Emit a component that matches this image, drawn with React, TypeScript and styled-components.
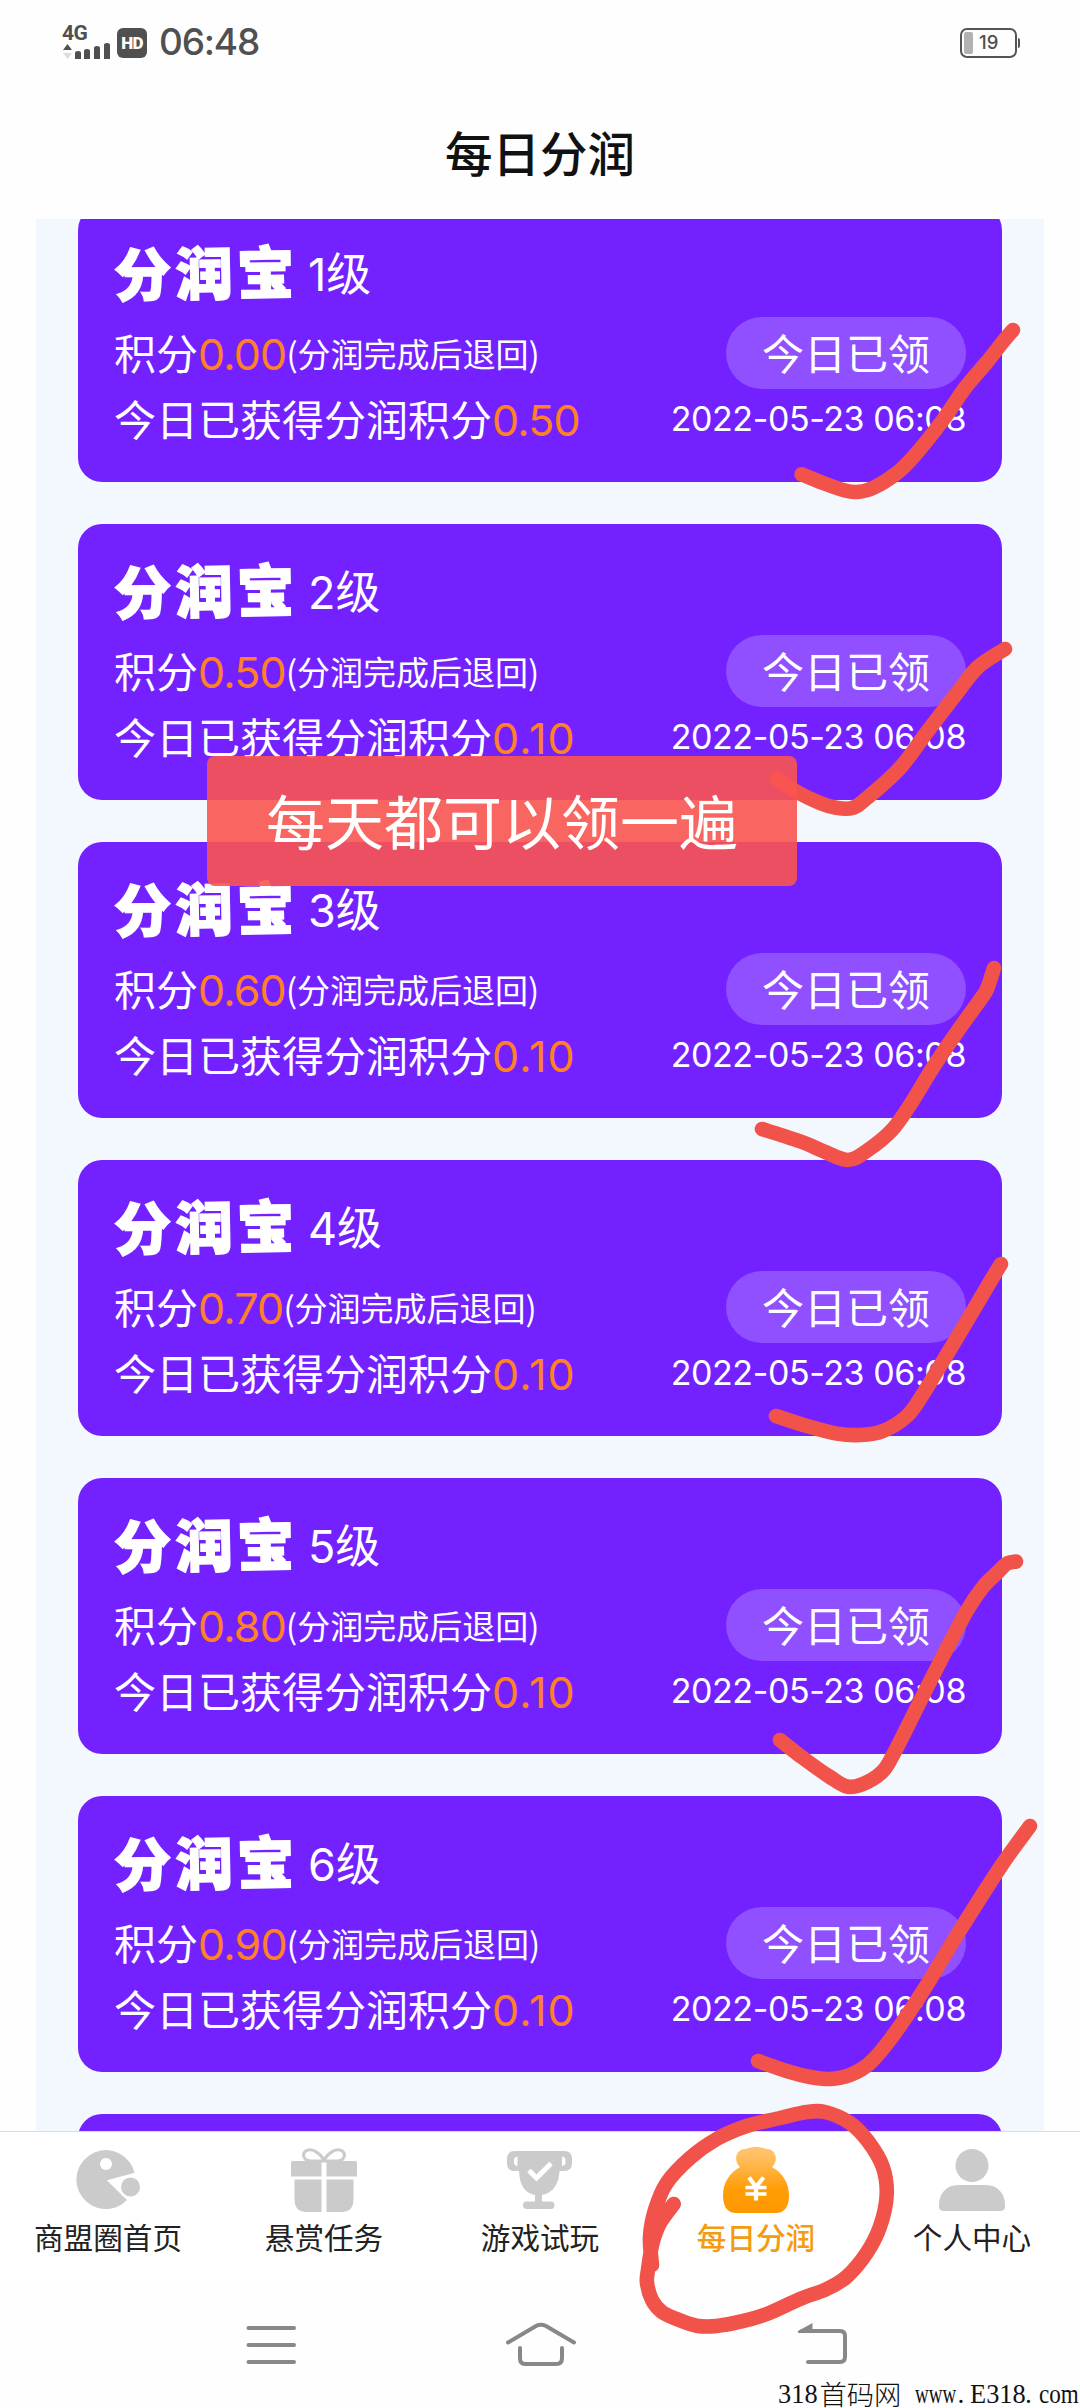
import React from "react";
import styled, { createGlobalStyle } from "styled-components";

const CJK = `"Noto Sans CJK SC", sans-serif`;
const NUM = `Inter, "Noto Sans CJK SC", sans-serif`;
const RED = "#f1534b";

const GlobalStyle = createGlobalStyle`
  * { box-sizing: border-box; }
  html, body { margin: 0; padding: 0; background: #fff; }
  body { font-family: ${CJK}; }
`;

const Screen = styled.div`
  position: relative;
  width: 1080px;
  height: 2408px;
  display: flex;
  flex-direction: column;
  overflow: hidden;
  background: #fefefe;
`;

/* ---------- status bar ---------- */

const StatusBar = styled.header`
  flex: none;
  height: 84px;
  padding: 0 60px 0 62px;
  display: flex;
  align-items: center;
  justify-content: space-between;
  color: #505050;
`;

const StatusGroup = styled.div`
  display: flex;
  align-items: center;
  gap: 6px;
`;

const Network = styled.div`
  width: 49px;
  height: 34px;
  display: flex;
  flex-direction: column;
`;

const NetworkType = styled.span`
  height: 16px;
  font: 700 21px/16px Roboto, sans-serif;
  letter-spacing: -0.6px;
`;

const HdBadge = styled.span`
  width: 30px;
  height: 30px;
  margin-top: 1px;
  border-radius: 6px;
  display: flex;
  align-items: center;
  justify-content: center;
  background: #505050;
  color: #fff;
  font: 900 17px/30px Roboto, sans-serif;
  letter-spacing: -0.6px;
`;

const Clock = styled.time`
  margin-left: 6px;
  font: 500 37px/40px ${NUM};
  letter-spacing: -1.2px;
`;

const Battery = styled.div`
  display: flex;
  align-items: center;
  gap: 1px;
  margin-top: 1px;
`;

const BatteryShell = styled.div`
  width: 57px;
  height: 30px;
  padding: 2px;
  border: 2.5px solid #555;
  border-radius: 7px;
  display: flex;
  align-items: stretch;
  gap: 6px;
`;

const BatteryLevel = styled.i`
  width: 9px;
  border-radius: 2px;
  background: #b2b2b2;
`;

const BatteryText = styled.span`
  font: 500 18.5px/21px ${NUM};
`;

const BatteryNub = styled.i`
  width: 2px;
  height: 10px;
  border-radius: 0 2px 2px 0;
  background: #555;
`;

const TitleBar = styled.div`
  flex: none;
  height: 135px;
  display: flex;
  justify-content: center;
`;

const Title = styled.h1`
  margin: 33px 0 0;
  font: 500 47.5px/70px ${CJK};
  color: #111;
`;

/* ---------- card list ---------- */

const Viewport = styled.main`
  flex: none;
  height: 1912px;
  margin: 0 36px;
  overflow: hidden;
  background: #f3f8fe;
`;

const List = styled.div`
  margin-top: -13px;
  padding: 0 42px;
  display: flex;
  flex-direction: column;
  gap: 42px;
`;

const Card = styled.article`
  flex: none;
  height: 276px;
  padding: 24px 36px 30px;
  border-radius: 24px;
  background: #7322ff;
  color: #fff;
`;

const CardHead = styled.div`
  height: 87px;
  display: flex;
  align-items: center;
`;

const Brand = styled.span`
  width: 183px;
  font: 900 57px/64px ${CJK};
  letter-spacing: 4.5px;
  white-space: nowrap;
  -webkit-text-stroke: 1.6px #fff;
  paint-order: stroke fill;
  transform: translate(0, -4px) rotate(-1deg);
`;

const Level = styled.span`
  margin-left: 11px;
  padding-top: 3px;
  font: 400 45px/60px ${NUM};
`;

const CardRow = styled.div<{ $h: number }>`
  height: ${(p) => p.$h}px;
  display: flex;
  align-items: center;
  justify-content: space-between;
`;

const Line = styled.p<{ $drop?: number }>`
  margin: 0;
  padding-top: ${(p) => p.$drop ?? 0}px;
  display: flex;
  align-items: baseline;
  font: 400 42px/60px ${CJK};
  white-space: nowrap;
`;

const Amount = styled.span<{ $loose?: boolean }>`
  font-family: ${NUM};
  font-size: 43px;
  letter-spacing: ${(p) => (p.$loose ? 1.1 : -0.8)}px;
  color: #ff8126;
`;

const Note = styled.small`
  font-size: 33px;
  transform: translateY(-3px);
`;

const Pill = styled.span`
  width: 240px;
  height: 72px;
  border-radius: 36px;
  text-align: center;
  background: #9050ff;
  font: 400 42px/70px ${CJK};
`;

const Stamp = styled.time`
  font: 400 34px/60px ${NUM};
  letter-spacing: -0.42px;
  white-space: nowrap;
`;

/* ---------- bottom bars ---------- */

const TabBar = styled.nav`
  flex: none;
  height: 149px;
  border-top: 1px solid #dcdcdc;
  display: grid;
  grid-template-columns: repeat(5, 1fr);
  background: #fff;
`;

const Tab = styled.div<{ $active?: boolean }>`
  padding-top: 15px;
  display: flex;
  flex-direction: column;
  align-items: center;
  gap: 4px;
  color: ${(p) => (p.$active ? "#f39c12" : "#222")};
  font: ${(p) => (p.$active ? 500 : 400)} 29.6px/40px ${CJK};
  white-space: nowrap;
`;

const SystemNav = styled.div`
  flex: 1;
  padding: 38px 228px 0 243px;
  display: grid;
  grid-template-columns: 260px 293px 56px;
  align-items: start;
`;

/* ---------- things drawn over the page ---------- */

const Toast = styled.div`
  position: absolute;
  left: 207px;
  top: 756px;
  width: 590px;
  height: 130px;
  border-radius: 8px;
  background: rgba(249, 84, 80, 0.9);
  color: #fff;
  text-align: center;
  font: 400 59px/128px ${CJK};
  white-space: nowrap;
`;

const Markup = styled.svg`
  position: absolute;
  inset: 0;
  pointer-events: none;
`;

const Watermark = styled.div`
  position: absolute;
  right: 0;
  bottom: 0;
  height: 26px;
  display: flex;
  color: #111;
  font: 400 27.5px/24px "Liberation Serif", "Noto Sans CJK SC", serif;
  white-space: pre;
`;

const Segment = styled.span<{ $w: number; $squeeze?: number; $cjk?: boolean }>`
  width: ${(p) => p.$w}px;
  ${(p) => p.$cjk && `font: 300 27.3px/22px ${CJK};`}
  transform: scaleX(${(p) => p.$squeeze ?? 1});
  transform-origin: left;
`;

const levels = [
  { level: 1, points: "0.00", gained: "0.50" },
  { level: 2, points: "0.50", gained: "0.10" },
  { level: 3, points: "0.60", gained: "0.10" },
  { level: 4, points: "0.70", gained: "0.10" },
  { level: 5, points: "0.80", gained: "0.10" },
  { level: 6, points: "0.90", gained: "0.10" },
];

type Pt = [number, number];

const ticks: Pt[][] = [
  [[801.7, 474.3], [823, 483], [845, 490.5], [857, 492], [873, 488], [897, 473], [915, 455], [943, 420], [965, 388], [987, 362], [1002, 343], [1013, 330]],
  [[777, 779], [797, 792], [820, 803], [835, 807.5], [852, 808], [867, 798], [900, 768], [927, 732], [957, 693], [978, 667], [1005, 649]],
  [[762, 1129], [802, 1142], [823, 1151], [848, 1160], [868, 1150], [892, 1130], [910, 1105], [933, 1067.5], [957, 1032], [980, 1000], [987, 989], [994, 968]],
  [[776, 1416], [807, 1426], [837, 1433.6], [860, 1435], [883, 1431], [907, 1416], [923, 1394], [940, 1366], [967, 1321], [990, 1282], [1001, 1264]],
  [[780, 1740], [803, 1758], [830, 1777], [847, 1786.5], [863, 1784], [882, 1772], [893, 1755], [918, 1705.5], [943, 1656], [967, 1610.6], [983, 1587], [998, 1572], [1007, 1563.5], [1016, 1561.5]],
  [[758, 2061], [790, 2072], [810, 2077], [830, 2079], [850, 2075], [870, 2063], [893, 2035.7], [923, 1991], [957, 1935], [1000, 1867.6], [1030, 1826]],
];

const ring: Pt[] = [
  [673.7, 2204], [660, 2223], [652.5, 2243], [648, 2270], [647, 2283], [652, 2300], [661.7, 2311.7], [676.7, 2319],
  [696.7, 2325.7], [716.7, 2326], [740, 2321.7], [766.7, 2314], [800, 2299], [826.7, 2289], [846.7, 2276.7],
  [866.7, 2253], [880, 2226.7], [886.7, 2195], [882.7, 2166.7], [868.3, 2141.7], [850, 2123], [825, 2112],
  [806.7, 2112], [780, 2118], [746.7, 2126], [716.7, 2139], [690, 2158], [666.7, 2183], [655, 2210], [650, 2237], [652, 2265],
];

const smooth = (p: Pt[]) =>
  p.slice(1).reduce((d, to, i) => {
    const before = p[i - 1] ?? p[i];
    const from = p[i];
    const after = p[i + 2] ?? to;
    const c1 = [from[0] + (to[0] - before[0]) / 6, from[1] + (to[1] - before[1]) / 6];
    const c2 = [to[0] - (after[0] - from[0]) / 6, to[1] - (after[1] - from[1]) / 6];
    return `${d} C${c1.join(" ")} ${c2.join(" ")} ${to.join(" ")}`;
  }, `M${p[0].join(" ")}`);

const GREY = "#cbcbcb";

const Pacman = () => (
  <svg width="66" height="66" viewBox="0 0 66 66">
    <path fill={GREY} d="M31 33 59 25.5A29 29 0 1 0 51.5 53Z" stroke={GREY} strokeWidth="1" strokeLinejoin="round" />
    <circle cx="31" cy="17" r="6" fill="#fff" />
    <circle cx="55.5" cy="40" r="11.5" fill="#fff" />
    <circle cx="55.5" cy="40" r="9.5" fill={GREY} />
  </svg>
);

const Gift = () => (
  <svg width="66" height="66" viewBox="0 0 66 66">
    <path fill="none" stroke={GREY} strokeWidth="3" d="M33 13C28 5 21 1 15.500 3.500 10 7 13 14 20 14H46C53 14 56 7 50.500 3.500 45 1 38 5 33 13Z" />
    <path fill={GREY} d="M2 14H30.500V29.500H0V16Q0 14 2 14ZM35.500 14H64Q66 14 66 16V29.500H35.500ZM3.500 32.500H30.500V65H14Q3.500 64 3.500 53ZM35.500 32.500H62.500V53Q62.500 64 52 65H35.500Z" />
  </svg>
);

const Trophy = () => (
  <svg width="66" height="66" viewBox="0 0 66 66">
    <path
      fill={GREY}
      d="M8 4H57Q65 4 65 12V16Q65 24 57 24H52.500C52 37 46 46 35 48V54.500H44Q47.500 54.500 47.500 58.200T44 62H19.500Q16 62 16 58.200T19.500 54.500H28V48C17 46 12.500 37 12 24H8Q0 24 0 16V12Q0 4 8 4Z"
    />
    <path fill="#fff" d="M10.500 9.500V19Q7 18.500 7 15.500V13Q7 10 10.500 9.500ZM55 9.500Q58.500 10 58.500 13V15.500Q58.500 18.500 55 19Z" />
    <path fill="none" stroke="#fff" strokeWidth="5" d="M22 23.500 29.500 31 44 16.500" />
  </svg>
);

const MoneyBag = () => (
  <svg width="66" height="66" viewBox="0 0 66 66">
    <defs>
      <linearGradient id="bag" x1="0" y1="0" x2="0" y2="1">
        <stop offset="0.1" stopColor="#ffc269" />
        <stop offset="0.65" stopColor="#ff9d05" />
        <stop offset="1" stopColor="#ff9800" />
      </linearGradient>
    </defs>
    <path fill="url(#bag)" d="M17 20C10 14 13 2 22 2 27 1 28 0 33 0S39 1 44 2C53 2 56 14 49 20 60 26 66 36 66 49 66 60 61 66 53 66H13C5 66 0 60 0 49 0 36 6 26 17 20Z" />
    <path fill="none" stroke="#fff" strokeWidth="4.200" d="M26 30.500 33 40 40.500 30.500M33 38V53.500" />
    <path fill="none" stroke="#fff" strokeWidth="3.400" d="M22.500 40.500H43.500M22.500 47H43.500" />
  </svg>
);

const Person = () => (
  <svg width="66" height="66" viewBox="0 0 66 66">
    <circle cx="33" cy="18.500" r="16.500" fill={GREY} />
    <path fill={GREY} d="M19 38H47C59 38 66 47 66 58V60Q66 64 61 64H5Q0 64 0 60V58C0 47 7 38 19 38Z" />
  </svg>
);

const tabs = [
  { label: "商盟圈首页", Icon: Pacman },
  { label: "悬赏任务", Icon: Gift },
  { label: "游戏试玩", Icon: Trophy },
  { label: "每日分润", Icon: MoneyBag, active: true },
  { label: "个人中心", Icon: Person },
];

const Score = ({ value }: { value: string }) => <Amount $loose={value.includes("1")}>{value}</Amount>;

const LevelCard = ({ level, points, gained }: (typeof levels)[number]) => (
  <Card>
    <CardHead>
      <Brand>分润宝</Brand>
      <Level>{level}级</Level>
    </CardHead>
    <CardRow $h={72}>
      <Line $drop={2}>
        积分
        <Score value={points} />
        <Note>(分润完成后退回)</Note>
      </Line>
      <Pill>今日已领</Pill>
    </CardRow>
    <CardRow $h={60}>
      <Line>
        今日已获得分润积分
        <Score value={gained} />
      </Line>
      <Stamp>2022-05-23 06:08</Stamp>
    </CardRow>
  </Card>
);

export default function App() {
  return (
    <Screen>
      <GlobalStyle />
      <StatusBar>
        <StatusGroup>
          <Network>
            <NetworkType>4G</NetworkType>
            <svg width="49" height="18" viewBox="0 0 49 18">
              <path fill="#505050" d="M5.500 3 10 9H1ZM13 12q0-2 3-2t3 2v6h-6ZM22 10q0-2 3-2t3 2v8h-6ZM32 7q0-2 3-2t3 2v11h-6ZM42 4q0-2 3-2t3 2v14h-6Z" />
              <path fill="#ddd" d="M1 12h9l-4.500 6Z" />
            </svg>
          </Network>
          <HdBadge>HD</HdBadge>
          <Clock>06:48</Clock>
        </StatusGroup>
        <Battery>
          <BatteryShell>
            <BatteryLevel />
            <BatteryText>19</BatteryText>
          </BatteryShell>
          <BatteryNub />
        </Battery>
      </StatusBar>
      <TitleBar>
        <Title>每日分润</Title>
      </TitleBar>
      <Viewport>
        <List>
          {levels.map((item) => (
            <LevelCard key={item.level} {...item} />
          ))}
          <Card />
        </List>
      </Viewport>
      <TabBar>
        {tabs.map(({ label, Icon, active }) => (
          <Tab key={label} $active={active}>
            <Icon />
            {label}
          </Tab>
        ))}
      </TabBar>
      <SystemNav>
        <svg width="56" height="56" viewBox="0 0 56 56" fill="none" stroke="#888" strokeWidth="4" strokeLinecap="round">
          <path d="M5.500 10H51M5.500 27H51M5.500 44H51" />
        </svg>
        <svg width="76" height="56" viewBox="0 0 76 56" fill="none" stroke="#888" strokeWidth="4" strokeLinecap="round" strokeLinejoin="round">
          <path d="M5 24.500 33 8Q38 5.500 43 8L71 24.500M17 30V40Q17 46 22 46H53.500Q59 46 59 40V30" />
        </svg>
        <svg width="56" height="56" viewBox="0 0 56 56" fill="none" stroke="#888" strokeWidth="4" strokeLinecap="round">
          <path d="M6 13H44Q49 13 49 18V39Q49 44 44 44H12" />
          <path fill="#888" stroke="none" d="M2 13 16.500 5V15H4Q1 15 2 13Z" />
        </svg>
      </SystemNav>
      <Markup width="1080" height="2408" viewBox="0 0 1080 2408" fill="none" stroke={RED} strokeWidth="14.600" strokeLinecap="round" strokeLinejoin="round">
        {[...ticks, ring].map((points, i) => (
          <path key={i} d={smooth(points)} />
        ))}
      </Markup>
      <Toast>每天都可以领一遍</Toast>
      <Watermark>
        <Segment $w={41.5} $squeeze={0.96}>318</Segment>
        <Segment $w={95} $cjk>首码网</Segment>
        <Segment $w={43} $squeeze={0.69}>www</Segment>
        <Segment $w={12}>.</Segment>
        <Segment $w={55.5} $squeeze={0.96}>E318</Segment>
        <Segment $w={14}>.</Segment>
        <Segment $w={41} $squeeze={0.84}>com</Segment>
      </Watermark>
    </Screen>
  );
}
